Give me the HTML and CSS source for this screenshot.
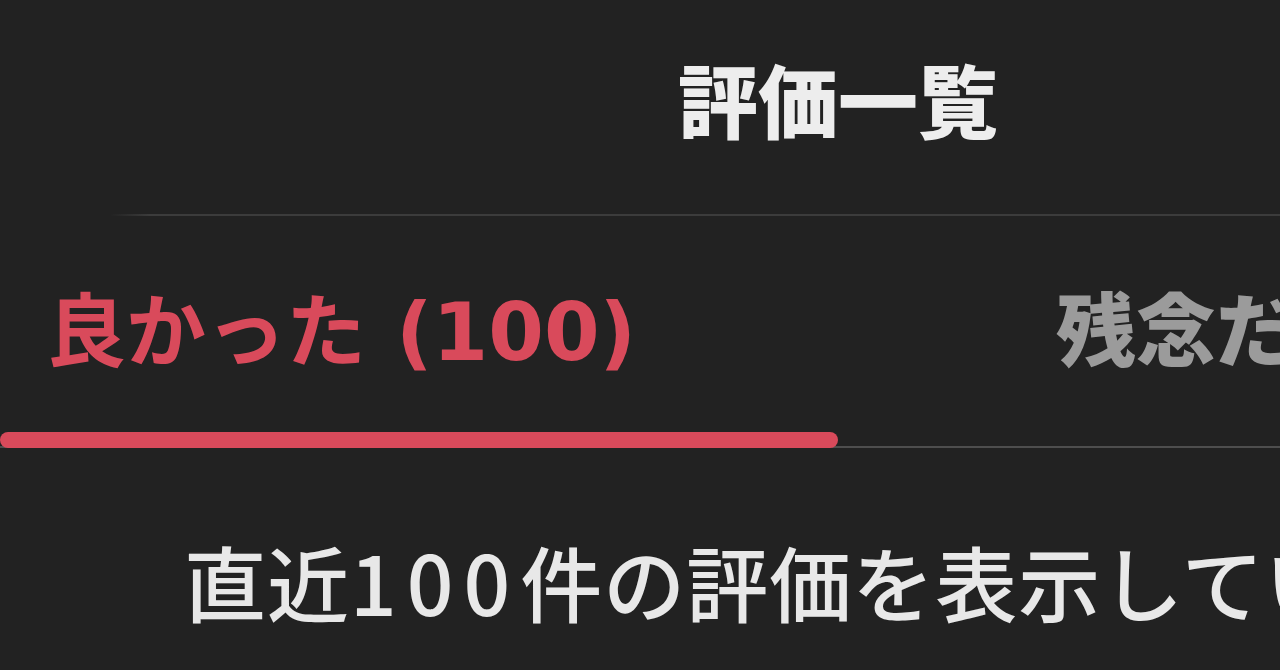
FILE: index.html
```html
<!DOCTYPE html>
<html lang="ja">
<head>
<meta charset="utf-8">
<title>評価一覧</title>
<link rel="stylesheet" href="styles.css">
</head>
<body>
<div class="screen">
  <header class="header">
    <h1 class="title">評価一覧</h1>
  </header>
  <div class="divider"></div>
  <nav class="tabs">
    <div class="tab tab-active"><span class="tab-label">良かった<span class="tab-count">(100)</span></span></div>
    <div class="tab tab-inactive"><span class="tab-label">残念だった<span class="tab-count">(0)</span></span></div>
  </nav>
  <p class="note">直近<span class="num">100</span>件の評価を表示しています</p>
</div>
</body>
</html>
```

FILE: styles.css
```css
html, body {
  margin: 0;
  padding: 0;
  background: #222222;
  overflow: hidden;
}

.screen {
  width: 1676px;
  height: 670px;
  background: #222222;
  font-family: "Noto Sans CJK JP", "Noto Sans", sans-serif;
}

.header {
  height: 214px;
  display: flex;
  justify-content: center;
  align-items: flex-start;
}

.title {
  margin: 52px 0 0 0;
  font-size: 80px;
  line-height: 90px;
  font-weight: 900;
  color: #ededed;
}

.divider {
  height: 2px;
  margin-left: 110px;
  background: linear-gradient(to right, rgba(70,70,70,0) 0, #3c3c3c 40px, #3c3c3c 100%);
}

.tabs {
  height: 232px;
  display: flex;
  border-bottom: 2px solid #4e4e4e;
  box-sizing: border-box;
}

.tab {
  position: relative;
  width: 838px;
  box-sizing: border-box;
  display: flex;
  align-items: flex-start;
}

.tab-label {
  margin-top: 64px;
  font-size: 80px;
  line-height: 90px;
  font-weight: 700;
  white-space: nowrap;
}

.tab-count {
  font-family: "DejaVu Sans", "Noto Sans", sans-serif;
  font-weight: 700;
  margin-left: 30px;
}

.tab-active {
  padding-left: 46px;
  color: #d94a5b;
}

.tab-active::after {
  content: "";
  position: absolute;
  left: 0;
  right: 0;
  bottom: -2px;
  height: 16px;
  border-radius: 8px;
  background: #d94a5b;
}

.tab-inactive {
  padding-left: 218px;
  color: #9b9b9b;
}

.tab-inactive .tab-label {
  font-weight: 900;
}

.note {
  margin: 88px 0 0 184px;
  font-size: 82px;
  line-height: 90px;
  font-weight: 500;
  color: #e8e8e8;
  letter-spacing: 1px;
  white-space: nowrap;
}

.num {
  letter-spacing: 10px;
}
```
